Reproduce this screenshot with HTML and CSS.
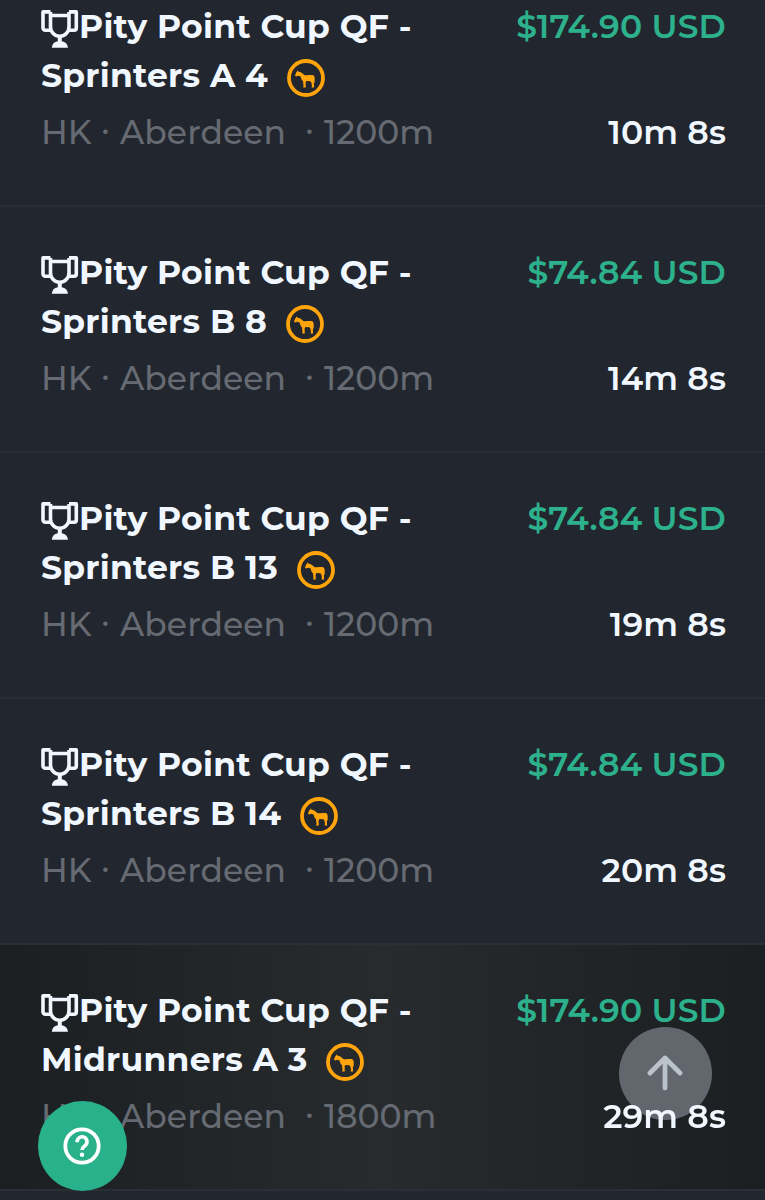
FILE: index.html
```html
<!DOCTYPE html>
<html lang="en">
<head>
    <meta charset="UTF-8">
    <meta name="viewport" content="width=device-width, initial-scale=1.0">
    <title>Next Races</title>
    <link rel="stylesheet" href="styles.css">
</head>
<body>
    <svg class="sprite" aria-hidden="true">
        <symbol id="trophy" viewBox="0 0 38 38">
            <path d="M9.500 5.500h18.500v11.500a9.250 9.250 0 0 1-18.500 0z M9.500 1.900H2V18a2.200 2.200 0 0 0 2.200 2.200H9.500 M28 1.900h7.300V18a2.200 2.200 0 0 1-2.200 2.200H28 M9.500 1.900v5 M28 1.900v5" fill="none" stroke="currentColor" stroke-width="3.600" stroke-linejoin="round"/>
            <path d="M16.800 26h4v5.200c3.600.600 5.800 2.800 6.200 6.500H10.800c.400-3.700 2.300-5.900 6-6.500z" fill="currentColor"/>
        </symbol>
        <symbol id="horse" viewBox="0 0 38 38">
            <circle cx="19" cy="19" r="17" fill="none" stroke="currentColor" stroke-width="3.800"/>
            <path d="M10.400 11.200l.9 1.200c2.600.3 4.300 1.700 5.900 3.500 2.900.7 5.800-.2 8.200.1 1.500.3 2.200 1.400 2.300 3v4l-.8 1 .2 4.600h-2.700l.6-1.400-.5-3.300-1-1.700-4.100-.1-.8 1.700.2 4.800h-2.700l.4-1.500-.5-4.900c-1.500-1.300-2.100-2.900-2.300-4.800l-2.600-.7-2 .9-1.100-.9 1.100-3.300 1-1z" fill="currentColor"/>
        </symbol>
    </svg>

    <main class="races">
        <div class="race">
            <div class="info">
                <div class="title">
                    <div class="line"><svg class="trophy"><use href="#trophy"/></svg><span>Pity Point Cup QF -</span></div>
                    <div class="line"><span>Sprinters A 4</span><svg class="horse"><use href="#horse"/></svg></div>
                </div>
                <div class="meta"><span class="country">HK</span><span class="dot">·</span><span class="city">Aberdeen</span><span class="dot">·</span><span class="distance">1200m</span></div>
            </div>
            <div class="side">
                <div class="prize">$174.90 USD</div>
                <div class="time">10m 8s</div>
            </div>
        </div>

        <div class="race">
            <div class="info">
                <div class="title">
                    <div class="line"><svg class="trophy"><use href="#trophy"/></svg><span>Pity Point Cup QF -</span></div>
                    <div class="line"><span>Sprinters B 8</span><svg class="horse"><use href="#horse"/></svg></div>
                </div>
                <div class="meta"><span class="country">HK</span><span class="dot">·</span><span class="city">Aberdeen</span><span class="dot">·</span><span class="distance">1200m</span></div>
            </div>
            <div class="side">
                <div class="prize">$74.84 USD</div>
                <div class="time">14m 8s</div>
            </div>
        </div>

        <div class="race">
            <div class="info">
                <div class="title">
                    <div class="line"><svg class="trophy"><use href="#trophy"/></svg><span>Pity Point Cup QF -</span></div>
                    <div class="line"><span>Sprinters B 13</span><svg class="horse"><use href="#horse"/></svg></div>
                </div>
                <div class="meta"><span class="country">HK</span><span class="dot">·</span><span class="city">Aberdeen</span><span class="dot">·</span><span class="distance">1200m</span></div>
            </div>
            <div class="side">
                <div class="prize">$74.84 USD</div>
                <div class="time">19m 8s</div>
            </div>
        </div>

        <div class="race">
            <div class="info">
                <div class="title">
                    <div class="line"><svg class="trophy"><use href="#trophy"/></svg><span>Pity Point Cup QF -</span></div>
                    <div class="line"><span>Sprinters B 14</span><svg class="horse"><use href="#horse"/></svg></div>
                </div>
                <div class="meta"><span class="country">HK</span><span class="dot">·</span><span class="city">Aberdeen</span><span class="dot">·</span><span class="distance">1200m</span></div>
            </div>
            <div class="side">
                <div class="prize">$74.84 USD</div>
                <div class="time">20m 8s</div>
            </div>
        </div>

        <div class="race active">
            <div class="info">
                <div class="title">
                    <div class="line"><svg class="trophy"><use href="#trophy"/></svg><span>Pity Point Cup QF -</span></div>
                    <div class="line"><span>Midrunners A 3</span><svg class="horse"><use href="#horse"/></svg></div>
                </div>
                <div class="meta"><span class="country">HK</span><span class="dot">·</span><span class="city">Aberdeen</span><span class="dot">·</span><span class="distance">1800m</span></div>
            </div>
            <div class="side">
                <div class="prize">$174.90 USD</div>
                <div class="time">29m 8s</div>
            </div>
        </div>
    </main>

    <button class="to-top" type="button" aria-label="Back to top">
        <svg viewBox="0 0 36 36"><path d="M18 33V3M3 18L18 3l15 15" fill="none" stroke="currentColor" stroke-width="4.800" stroke-linecap="round" stroke-linejoin="round"/></svg>
    </button>
    <button class="help" type="button" aria-label="Help">
        <svg viewBox="0 0 38 38"><circle cx="19" cy="19" r="16.700" fill="none" stroke="currentColor" stroke-width="3.800"/><path d="M14.200 15.200v-.4a4.900 4.900 0 1 1 8.300 3.400c-1.700 1.600-3.500 2.500-3.500 4.800" fill="none" stroke="currentColor" stroke-width="3.600"/><circle cx="19" cy="27.800" r="2.200" fill="currentColor"/></svg>
    </button>
</body>
</html>
```
FILE: styles.css
```css
body {
    margin: 0;
    height: 1200px;
    overflow: hidden;
    background-color: #22262e;
    color: #f1f7ff;
    font-family: Montserrat, Inter, sans-serif;
    font-size: 33px;
    line-height: 49px;
    white-space: nowrap;
}

.sprite {
    display: none;
}

.races {
    margin-top: -39px;
}

.race {
    display: flex;
    justify-content: space-between;
    box-sizing: border-box;
    height: 246px;
    padding: 41px 39px 0 41px;
    border-bottom: 2px solid #2a2e35;
}

.race.active {
    background: linear-gradient(90deg, #1b1f22, #272b2e 50%, #1b1f22);
}

.line {
    display: flex;
    height: 49px;
}

.title {
    font-weight: 700;
    letter-spacing: 0.26px;
    margin-bottom: 8px;
}

.trophy {
    width: 38px;
    height: 38px;
    margin-top: 8px;
    flex: none;
}

.horse {
    width: 38px;
    height: 38px;
    margin: 7.5px 0 0 18.5px;
    color: #ffa40a;
}

.meta {
    display: flex;
    font-weight: 500;
    color: #666a72;
}

.country {
    width: 60px;
}

.city {
    width: 185px;
    letter-spacing: 0.1px;
}

.dot {
    width: 19px;
    line-height: 43px;
}

.side {
    display: flex;
    flex-direction: column;
    gap: 57px;
    text-align: right;
    font-weight: 600;
}

.prize {
    color: #2db18c;
    letter-spacing: 0.15px;
}

.time {
    position: relative;
    z-index: 2;
    letter-spacing: 0.1px;
}

button {
    position: fixed;
    display: flex;
    align-items: center;
    justify-content: center;
    padding: 0;
    border: none;
    border-radius: 50%;
    cursor: pointer;
}

.to-top {
    left: 619px;
    top: 1027px;
    z-index: 1;
    width: 93px;
    height: 93px;
    background-color: #62666d;
    color: #bac2cb;
}

.to-top svg {
    width: 36px;
    height: 36px;
    margin: 0 1px 1px 0;
}

.help {
    left: 37.5px;
    top: 1101px;
    z-index: 3;
    width: 89.5px;
    height: 89.5px;
    background-color: #28b18b;
    color: #fff;
}

.help svg {
    width: 38px;
    height: 38px;
}
```
